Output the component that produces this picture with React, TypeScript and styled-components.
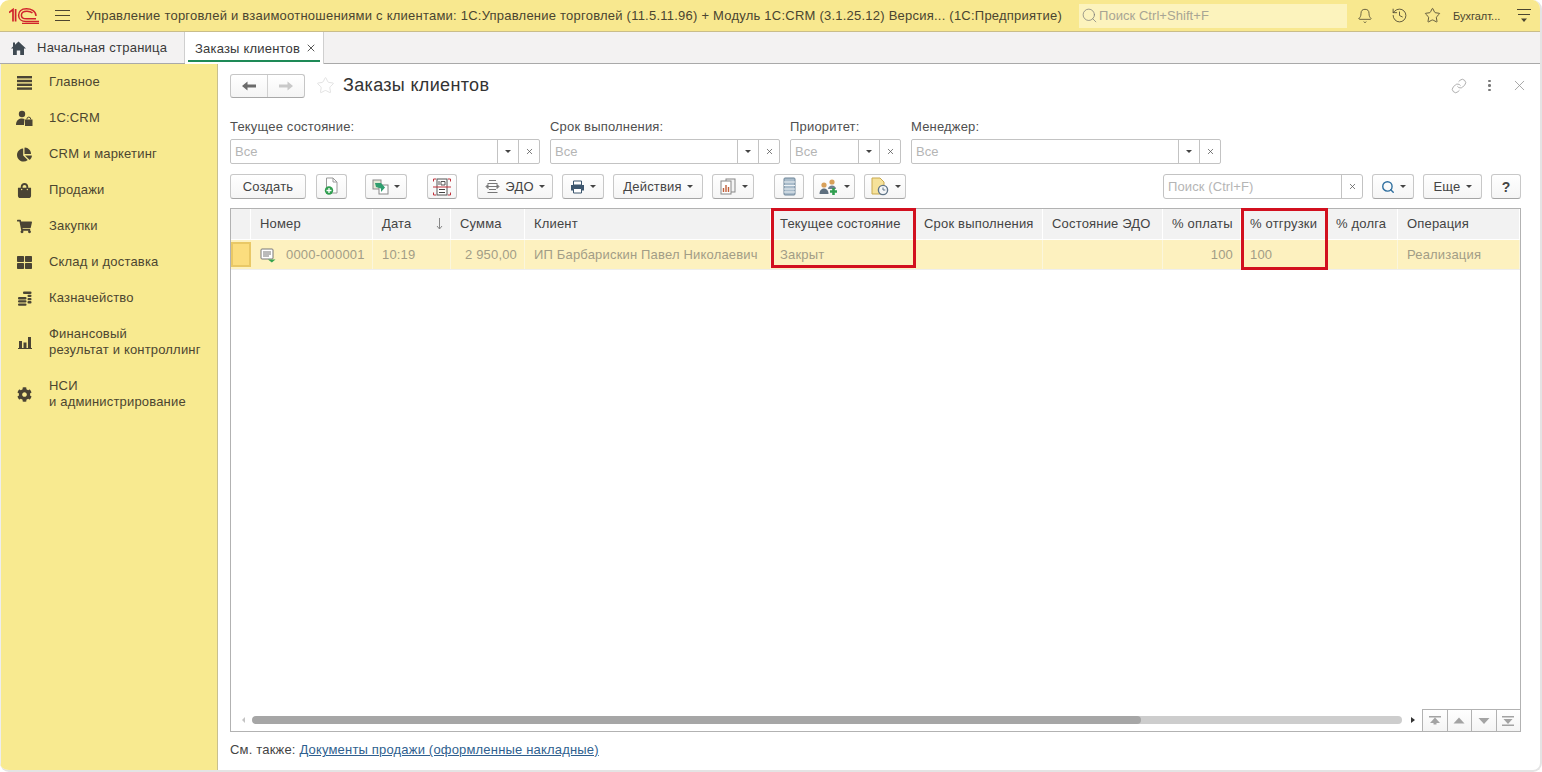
import React from 'react';
import styled, { createGlobalStyle } from 'styled-components';
import { Bell, History, Star, Link as LinkIcon, X, Search } from 'lucide-react';
import { FaChartPie, FaShoppingBag, FaShoppingCart, FaThLarge, FaCog } from 'react-icons/fa';

const GlobalStyle = createGlobalStyle`
  html, body {
    margin: 0;
    padding: 0;
    background: #fff;
  }
  * {
    box-sizing: border-box;
  }
`;

const Page = styled.div`
  width: 1542px;
  height: 772px;
  overflow: hidden;
  display: flex;
  flex-direction: column;
  font-family: 'Liberation Sans', Arial, sans-serif;
  font-size: 13px;
  letter-spacing: 0.18px;
  color: #333;
  background: #fff;
  border-radius: 9px;
  border-right: 2px solid #e4e4e4;
  border-bottom: 2px solid #e4e4e4;
`;

const TopBar = styled.header`
  height: 32px;
  flex: none;
  display: flex;
  align-items: center;
  background: #f8e88f;
  border-bottom: 1px solid #c9bd8a;
  padding-left: 9px;
`;

const MenuLines = styled.div`
  width: 15px;
  height: 11px;
  margin-left: 16px;
  border-top: 1px solid #4d4530;
  border-bottom: 1px solid #4d4530;
  position: relative;

  &::after {
    content: '';
    position: absolute;
    left: 0;
    right: 0;
    top: 4px;
    border-top: 1px solid #4d4530;
  }
`;

const AppTitle = styled.div`
  margin-left: 16px;
  width: 993px;
  white-space: nowrap;
  overflow: hidden;
  color: #4a4530;
  font-size: 13px;
  letter-spacing: 0.23px;
`;

const GlobalSearch = styled.div`
  width: 268px;
  height: 24px;
  display: flex;
  align-items: center;
  gap: 1px;
  padding-left: 2px;
  background: #fcf3bd;
  color: #a8a594;
  font-size: 13px;
  letter-spacing: 0.05px;
`;

const TopIcon = styled.div<{ $ml: number }>`
  margin-left: ${({ $ml }) => $ml}px;
  display: flex;
  align-items: center;
  color: #4a4530;
`;

const UserName = styled.div`
  margin-left: 12px;
  width: 62px;
  font-size: 11px;
  letter-spacing: 0;
  color: #4a4530;
`;

const TabBar = styled.nav`
  height: 32px;
  flex: none;
  display: flex;
  background: #f3f2f2;
  border-bottom: 1px solid #a9a9a9;
`;

const HomeTab = styled.div`
  width: 185px;
  display: flex;
  align-items: center;
  padding-left: 11px;
  gap: 11px;
  border-right: 1px solid #cfcfcf;
  color: #3a3a3a;
  letter-spacing: 0.25px;
`;

const ActiveTab = styled.div`
  width: 139px;
  height: 32px;
  padding: 0 6px 0 10px;
  display: flex;
  align-items: center;
  justify-content: space-between;
  background: #fff;
  border-right: 1px solid #cfcfcf;
  position: relative;
  color: #3a3a3a;
  letter-spacing: 0.2px;

  &::after {
    content: '';
    position: absolute;
    left: 3px;
    right: 3px;
    bottom: 2px;
    height: 2px;
    background: #1e8a57;
  }
`;

const Body = styled.div`
  flex: 1;
  min-height: 0;
  display: flex;
`;

const Sidebar = styled.aside`
  width: 218px;
  flex: none;
  background: #f8ea90;
  border-right: 1px solid #c9c08e;
  border-left: 1px solid #eee;
`;

const SideItem = styled.div<{ $tall?: boolean }>`
  height: ${({ $tall }) => ($tall ? 52 : 36)}px;
  display: flex;
  align-items: center;
  color: #4c4630;
  line-height: 16px;
`;

const SideIcon = styled.div`
  width: 48px;
  flex: none;
  display: flex;
  justify-content: center;
  padding-right: 1px;
  color: #4a4434;
`;

const Main = styled.main`
  flex: 1;
  min-width: 0;
  padding: 10px 19px 0 12px;
  display: flex;
  flex-direction: column;
`;

const TitleRow = styled.div`
  height: 23px;
  display: flex;
  align-items: center;
`;

const NavPair = styled.div`
  width: 75px;
  height: 24px;
  display: flex;
  border: 1px solid #c6c6c6;
  border-bottom-color: #a8a8a8;
  border-radius: 3px;
  background: linear-gradient(#fff, #f4f4f4);
`;

const NavHalf = styled.div<{ $divider?: boolean }>`
  flex: 1;
  display: flex;
  align-items: center;
  justify-content: center;
  border-right: ${({ $divider }) => ($divider ? '1px solid #d0d0d0' : 'none')};
`;

const FavStar = styled.div`
  margin-left: 11px;
  color: #dcdcdc;
  display: flex;
`;

const Title = styled.h1`
  margin: 0 0 0 8px;
  flex: 1;
  font-size: 18px;
  font-weight: 400;
  letter-spacing: 0.33px;
  color: #333;
`;

const WindowIcons = styled.div`
  display: flex;
  align-items: center;
  color: #929292;
  margin-right: -7px;
`;

const DotColumn = styled.div`
  margin: 0 20px 0 21px;
  width: 3px;
  display: flex;
  flex-direction: column;
  gap: 2px;
`;

const Dot = styled.span`
  width: 2.5px;
  height: 2.5px;
  background: #777;
  border-radius: 50%;
`;

const FilterRow = styled.div`
  display: flex;
  gap: 10px;
  margin-top: 22px;
`;

const Filter = styled.div<{ $w: number }>`
  width: ${({ $w }) => $w}px;
`;

const FilterLabel = styled.div`
  height: 20px;
  line-height: 15px;
  color: #4f4f4f;
`;

const FieldBox = styled.div`
  height: 25px;
  display: flex;
  border: 1px solid #c3c3c3;
  border-radius: 2px;
  background: #fff;
`;

const FieldText = styled.div`
  flex: 1;
  padding-left: 4px;
  line-height: 23px;
  color: #b5b5b5;
  font-size: 13px;
  letter-spacing: 0.1px;
`;

const FieldBtn = styled.div`
  width: 21px;
  flex: none;
  display: flex;
  align-items: center;
  justify-content: center;
  border-left: 1px solid #c3c3c3;
  color: #555;
`;

const Toolbar = styled.div`
  display: flex;
  margin-top: 10px;
  height: 25px;
`;

const ToolButton = styled.div<{ $w: number; $ml?: number }>`
  width: ${({ $w }) => $w}px;
  margin-left: ${({ $ml }) => $ml ?? 0}px;
  height: 25px;
  display: flex;
  align-items: center;
  justify-content: center;
  gap: 5px;
  border: 1px solid #c8c8c8;
  border-bottom-color: #a5a5a5;
  border-radius: 3px;
  background: linear-gradient(#fff, #f5f5f5);
  color: #444;
  flex: none;
`;

const Caret = styled.span`
  width: 0;
  height: 0;
  border-left: 3px solid transparent;
  border-right: 3px solid transparent;
  border-top: 3px solid #444;
  flex: none;
`;

const TableSearch = styled.div`
  margin-left: auto;
  width: 200px;
  height: 25px;
  display: flex;
  border: 1px solid #c3c3c3;
  border-radius: 3px;
`;

const Table = styled.section`
  position: relative;
  margin-top: 9px;
  height: 524px;
  border: 1px solid #b2b2b2;
  display: flex;
  flex-direction: column;
`;

const columns = '20px 122px 78px 74px 246px 144px 128px 120px 78px 86px 71px 1fr';

const HeadRow = styled.div`
  height: 31px;
  flex: none;
  display: grid;
  grid-template-columns: ${columns};
  background: #f2f2f2;
  border-bottom: 1px solid #fff;
`;

const HeadCell = styled.div`
  display: flex;
  align-items: center;
  justify-content: space-between;
  padding: 0 7px 1px 9px;
  border-right: 1px solid #fff;
  color: #444;
  white-space: nowrap;
`;

const DataRow = styled.div`
  height: 30px;
  flex: none;
  display: grid;
  grid-template-columns: ${columns};
  background: #fdf1bf;
  border-bottom: 1px solid #eeeeee;
`;

const DataCell = styled.div<{ $right?: boolean }>`
  display: flex;
  align-items: center;
  justify-content: ${({ $right }) => ($right ? 'flex-end' : 'flex-start')};
  padding: 0 7px 0 9px;
  border-right: 1px solid #fbf6dc;
  color: #a29d86;
  white-space: nowrap;
`;

const RowMarker = styled.div`
  margin: 2px 0;
  background: #fbdd7e;
  border: 2px solid #e9c866;
`;

const NumberCell = styled(DataCell)`
  gap: 9px;
`;

const TableGap = styled.div`
  flex: 1;
`;

const ScrollRow = styled.div`
  height: 22px;
  flex: none;
  display: flex;
  align-items: center;
`;

const ScrollTrack = styled.div`
  margin-left: 7px;
  width: 1150px;
  height: 8px;
  border-radius: 4px;
  background: #cdcdcd;
  overflow: hidden;
`;

const ScrollThumb = styled.div`
  width: 77.3%;
  height: 100%;
  border-radius: 4px;
  background: #a6a6a6;
`;

const ArrowLeft = styled.span`
  margin-left: 11px;
  border-top: 3px solid transparent;
  border-bottom: 3px solid transparent;
  border-right: 3px solid #c4c4c4;
`;

const ArrowRight = styled.span`
  margin-left: 9px;
  border-top: 3px solid transparent;
  border-bottom: 3px solid transparent;
  border-left: 4px solid #333;
`;

const PagerGroup = styled.div`
  margin-left: auto;
  display: flex;
  height: 22px;
`;

const PagerBtn = styled.div`
  width: 24.5px;
  display: flex;
  align-items: center;
  justify-content: center;
  border-left: 1px solid #b2b2b2;
  border-top: 1px solid #b2b2b2;
  background: linear-gradient(#fff, #f4f4f4);
`;

const Highlight = styled.div<{ $left: number; $w: number; $h: number }>`
  position: absolute;
  top: -1px;
  left: ${({ $left }) => $left}px;
  width: ${({ $w }) => $w}px;
  height: ${({ $h }) => $h}px;
  border: 3px solid #d2101f;
  pointer-events: none;
`;

const SeeAlso = styled.div`
  margin-top: 10px;
  line-height: 16px;
  color: #444;
`;

const DocLink = styled.span`
  color: #2f5f8f;
  text-decoration: underline;
`;

const HelpMark = styled.span`
  font-weight: 700;
  font-size: 14px;
  color: #444;
`;

const Logo1C = () => (
  <svg width="30" height="16" viewBox="0 0 30 16" fill="none" stroke="#d0242c" strokeWidth="1.5">
    <path d="M0 4.5 L4 1.5 V13.5 M6.6 1 V13.5" strokeWidth="1.7" />
    <path d="M27 8 C27 2.5 21.5 0.8 17.5 0.8 C12 0.8 9.6 4 9.6 7.2 C9.6 11 12.5 13.5 17 13.5 H30" />
    <path d="M23.5 5 C22 3.6 20 3.2 18 3.2 C14.5 3.2 12.4 5 12.4 7.2 C12.4 9.5 14.5 10.8 17.5 10.8 H27" />
    <path d="M13 15.4 H30" strokeWidth="1.2" />
  </svg>
);

const FilterMenuIcon = () => (
  <svg width="16" height="15" viewBox="0 0 16 15" fill="none" stroke="#4a4530">
    <path d="M1 1.5 H15 M2 6.5 H14" />
    <path d="M5 10.5 H11 L8 14 Z" fill="#4a4530" stroke="none" />
  </svg>
);

const HomeIcon = () => (
  <svg width="15" height="14" viewBox="0 0 15 14" fill="#3f4a52">
    <path d="M7.5 0.5 L15 7.5 H13 V14 H9.2 V9.5 H5.8 V14 H2 V7.5 H0 L2 5.6 V1.5 H4 V3.8 Z" />
  </svg>
);

const LinesIcon = () => (
  <svg width="15" height="15" viewBox="0 0 15 15" fill="currentColor">
    <rect y="1" width="15" height="2.4" />
    <rect y="4.8" width="15" height="2.4" />
    <rect y="8.6" width="15" height="2.4" />
    <rect y="12.4" width="15" height="2.4" />
  </svg>
);

const PersonBagIcon = () => (
  <svg width="17" height="17" viewBox="0 0 17 17" fill="currentColor">
    <circle cx="6" cy="4" r="3.2" />
    <path d="M0 15 C0 10 3 8.5 6 8.5 C7 8.5 8 8.7 8.5 9 L8 15 Z" />
    <path d="M9 9.5 H16.5 V16 H9 Z" />
    <path d="M10.8 9.5 a2 2.4 0 0 1 4 0" fill="none" stroke="currentColor" />
  </svg>
);

const CoinsIcon = () => (
  <svg width="14" height="15" viewBox="0 0 14 15" fill="currentColor">
    <rect x="0" y="6" width="8.5" height="2.4" rx="1" />
    <rect x="0" y="9.2" width="8.5" height="2.4" rx="1" />
    <rect x="0" y="12.4" width="8.5" height="2.4" rx="1" />
    <rect x="5" y="0.5" width="8.5" height="2.4" rx="1" />
    <rect x="9.5" y="3.7" width="4" height="2.4" rx="1" />
    <rect x="9.5" y="6.9" width="4" height="2.4" rx="1" />
    <rect x="9.5" y="10.1" width="4" height="2.4" rx="1" />
  </svg>
);

const BarsIcon = () => (
  <svg width="14" height="13" viewBox="0 0 14 13" fill="currentColor">
    <rect x="1" y="5" width="3" height="7" />
    <rect x="5.5" y="6.5" width="3" height="5.5" />
    <rect x="10" y="1" width="3" height="11" />
    <rect y="12" width="14" height="1" />
  </svg>
);

const DocAddIcon = () => (
  <svg width="15" height="19" viewBox="0 0 15 19" fill="none">
    <path d="M2.5 1 H9 L13 5 V16 H2.5 Z" fill="#fff" stroke="#9a9a9a" />
    <path d="M9 1 V5 H13" stroke="#9a9a9a" />
    <circle cx="5" cy="13.5" r="4.2" fill="#2f9e4f" />
    <path d="M5 11 V16 M2.5 13.5 H7.5" stroke="#fff" strokeWidth="1.3" />
  </svg>
);

const CopyGreenIcon = () => (
  <svg width="17" height="16" viewBox="0 0 17 16" fill="none">
    <rect x="1" y="1" width="8" height="9" fill="#e4e9d6" stroke="#8a8a8a" />
    <rect x="7" y="6" width="9" height="9" fill="#fff" stroke="#8a8a8a" />
    <path d="M3 4 L9 4 L13 8.5 L9 13 L9 9.5 L4 8 Z" fill="#2f9e6f" />
  </svg>
);

const ScanIcon = () => (
  <svg width="18" height="18" viewBox="0 0 18 18" fill="none">
    <path d="M3 1 H0.5 V3.5 M15 1 H17.5 V3.5 M3 17 H0.5 V14.5 M15 17 H17.5 V14.5" stroke="#c0303a" />
    <rect x="4" y="1" width="10" height="16" fill="#fff" stroke="#555" />
    <path d="M6 3 V7 M8 3.5 H12 V7 H8 Z" stroke="#444" strokeWidth="0.9" />
    <path d="M6 11.5 H12 M6 14.5 H12" stroke="#444" />
    <path d="M0 9 H18" stroke="#c0303a" />
  </svg>
);

const EdoIcon = () => (
  <svg width="15" height="15" viewBox="0 0 15 15" fill="none" stroke="#777">
    <path d="M4 1.5 H11 M2.5 4.5 H12.5 M2.5 7.5 H12.5 M4 10.5 H11 M2.5 13.5 H12.5" />
    <path d="M1 7.5 L3 5.5 V9.5 Z M14 7.5 L12 5.5 V9.5 Z" fill="#777" />
  </svg>
);

const PrinterIcon = () => (
  <svg width="15" height="14" viewBox="0 0 15 14" fill="none">
    <path d="M3.5 1 H11.5 V5 H3.5 Z" fill="#fff" stroke="#3c566e" />
    <path d="M1 5 H14 V10.5 H1 Z" fill="#3c566e" />
    <path d="M3.5 8.5 H11.5 V13 H3.5 Z" fill="#fff" stroke="#3c566e" />
  </svg>
);

const ReportIcon = () => (
  <svg width="18" height="17" viewBox="0 0 18 17" fill="none">
    <rect x="7" y="1" width="9" height="13" fill="#f4f4f4" stroke="#888" />
    <rect x="2" y="3" width="10" height="13" fill="#fff" stroke="#888" />
    <path d="M4.5 14 V10 M7 14 V7 M9.5 14 V9" stroke="#c0603a" strokeWidth="1.4" />
  </svg>
);

const ListIcon = () => (
  <svg width="13" height="19" viewBox="0 0 13 19" fill="none">
    <rect x="1" y="1" width="11" height="17" rx="1" fill="#a9bccb" stroke="#6f8598" />
    <path d="M1 5 H12 M1 8.5 H12 M1 12 H12 M1 15 H12" stroke="#eef2f5" />
  </svg>
);

const PeopleAddIcon = () => (
  <svg width="20" height="18" viewBox="0 0 20 18" fill="none">
    <circle cx="5" cy="7" r="2.6" fill="#d8a05a" />
    <path d="M0.5 16 C0.5 12 3 10.5 5 10.5 C7 10.5 9.5 12 9.5 16 Z" fill="#5e6f7f" />
    <circle cx="13" cy="4" r="2.6" fill="#d8a05a" />
    <path d="M9 11 C9 9 11 7.5 13 7.5 C15 7.5 17 9 17 11 Z" fill="#6e7f8f" />
    <path d="M14.5 10 V17 M11 13.5 H18" stroke="#2f9e4f" strokeWidth="2.6" />
  </svg>
);

const DocClockIcon = () => (
  <svg width="20" height="19" viewBox="0 0 20 19" fill="none">
    <path d="M2 1 H10 L14 5 V17 H2 Z" fill="#f6e29a" stroke="#c9a94f" />
    <circle cx="13" cy="13" r="4.6" fill="#f4f6f8" stroke="#5f7488" strokeWidth="1.4" />
    <path d="M13 10.5 V13 H15.3" stroke="#5f7488" />
  </svg>
);

const NavArrow = ({ color, flip }: { color: string; flip?: boolean }) => (
  <svg width="14" height="10" viewBox="0 0 14 10" fill={color}>
    <path d={flip ? 'M14 5 L8.5 0.5 V3.5 H0 V6.5 H8.5 V9.5 Z' : 'M0 5 L5.5 0.5 V3.5 H14 V6.5 H5.5 V9.5 Z'} />
  </svg>
);

const SortArrow = () => (
  <svg width="7" height="12" viewBox="0 0 7 12" fill="none" stroke="#888">
    <path d="M3.5 0 V11 M1 8 L3.5 11 L6 8" />
  </svg>
);

const PagerIcon = ({ kind }: { kind: 'first' | 'up' | 'down' | 'last' }) => {
  const fill = '#a3a3a3';
  return (
    <svg width="14" height="10" viewBox="0 0 14 10" fill={fill}>
      {kind === 'first' && <path d="M1 0 H13 V1.5 H1 Z M7 1.5 L12 7 H8.5 V8.5 H5.5 V7 H2 Z" />}
      {kind === 'up' && <path d="M7 1.5 L12.5 7.5 H1.5 Z" />}
      {kind === 'down' && <path d="M7 8 L12.5 2 H1.5 Z" />}
      {kind === 'last' && <path d="M1 0 H13 V1.5 H1 Z M2.5 3 H11.5 L7 8 Z M1 8.5 H13 V10 H1 Z" />}
    </svg>
  );
};

const RowDocIcon = () => (
  <svg width="17" height="16" viewBox="0 0 17 16" fill="none">
    <rect x="1" y="2" width="12" height="10" rx="1" fill="#fff" stroke="#777" />
    <path d="M3 5 H11 M3 7 H11 M3 9 H9" stroke="#777" />
    <path d="M8 12.5 H15.5 L11.8 15.5 Z" fill="#35a34e" />
  </svg>
);

const sideItems: { icon: React.ReactNode; text: React.ReactNode; tall?: boolean }[] = [
  { icon: <LinesIcon />, text: 'Главное' },
  { icon: <PersonBagIcon />, text: '1С:CRM' },
  { icon: <FaChartPie size={15} />, text: 'CRM и маркетинг' },
  { icon: <FaShoppingBag size={15} />, text: 'Продажи' },
  { icon: <FaShoppingCart size={15} />, text: 'Закупки' },
  { icon: <FaThLarge size={15} />, text: 'Склад и доставка' },
  { icon: <CoinsIcon />, text: 'Казначейство' },
  {
    icon: <BarsIcon />,
    text: (
      <>
        Финансовый
        <br />
        результат и контроллинг
      </>
    ),
    tall: true,
  },
  {
    icon: <FaCog size={15} />,
    text: (
      <>
        НСИ
        <br />и администрирование
      </>
    ),
    tall: true,
  },
];

const filters = [
  { label: 'Текущее состояние:', w: 310 },
  { label: 'Срок выполнения:', w: 230 },
  { label: 'Приоритет:', w: 111 },
  { label: 'Менеджер:', w: 310 },
];

const headers = [
  '',
  'Номер',
  'Дата',
  'Сумма',
  'Клиент',
  'Текущее состояние',
  'Срок выполнения',
  'Состояние ЭДО',
  '% оплаты',
  '% отгрузки',
  '% долга',
  'Операция',
];

const App: React.FC = () => {
  return (
    <Page>
      <GlobalStyle />
      <TopBar>
        <Logo1C />
        <MenuLines />
        <AppTitle>
          Управление торговлей и взаимоотношениями с клиентами: 1С:Управление торговлей (11.5.11.96) + Модуль 1С:CRM
          (3.1.25.12) Версия... (1С:Предприятие)
        </AppTitle>
        <GlobalSearch>
          <Search size={17} strokeWidth={1} color="#777" />
          Поиск Ctrl+Shift+F
        </GlobalSearch>
        <TopIcon $ml={10}>
          <Bell size={16} strokeWidth={1.2} />
        </TopIcon>
        <TopIcon $ml={18}>
          <History size={17} strokeWidth={1.2} />
        </TopIcon>
        <TopIcon $ml={16}>
          <Star size={17} strokeWidth={1.2} />
        </TopIcon>
        <UserName>Бухгалт...</UserName>
        <TopIcon $ml={1}>
          <FilterMenuIcon />
        </TopIcon>
      </TopBar>
      <TabBar>
        <HomeTab>
          <HomeIcon />
          Начальная страница
        </HomeTab>
        <ActiveTab>
          Заказы клиентов
          <X size={12} strokeWidth={1.8} color="#444" />
        </ActiveTab>
      </TabBar>
      <Body>
        <Sidebar>
          {sideItems.map((item, i) => (
            <SideItem key={i} $tall={item.tall}>
              <SideIcon>{item.icon}</SideIcon>
              <div>{item.text}</div>
            </SideItem>
          ))}
        </Sidebar>
        <Main>
          <TitleRow>
            <NavPair>
              <NavHalf $divider>
                <NavArrow color="#6b6b6b" />
              </NavHalf>
              <NavHalf>
                <NavArrow color="#c9c9c9" flip />
              </NavHalf>
            </NavPair>
            <FavStar>
              <Star size={19} strokeWidth={1} />
            </FavStar>
            <Title>Заказы клиентов</Title>
            <WindowIcons>
              <LinkIcon size={16} strokeWidth={1.1} />
              <DotColumn>
                <Dot />
                <Dot />
                <Dot />
              </DotColumn>
              <X size={17} strokeWidth={1.1} />
            </WindowIcons>
          </TitleRow>
          <FilterRow>
            {filters.map((f) => (
              <Filter key={f.label} $w={f.w}>
                <FilterLabel>{f.label}</FilterLabel>
                <FieldBox>
                  <FieldText>Все</FieldText>
                  <FieldBtn>
                    <Caret />
                  </FieldBtn>
                  <FieldBtn>
                    <X size={9} strokeWidth={2} />
                  </FieldBtn>
                </FieldBox>
              </Filter>
            ))}
          </FilterRow>
          <Toolbar>
            <ToolButton $w={76}>Создать</ToolButton>
            <ToolButton $w={31} $ml={10}>
              <DocAddIcon />
            </ToolButton>
            <ToolButton $w={42} $ml={18}>
              <CopyGreenIcon />
              <Caret />
            </ToolButton>
            <ToolButton $w={30} $ml={20}>
              <ScanIcon />
            </ToolButton>
            <ToolButton $w={76} $ml={20}>
              <EdoIcon />
              ЭДО
              <Caret />
            </ToolButton>
            <ToolButton $w={42} $ml={9}>
              <PrinterIcon />
              <Caret />
            </ToolButton>
            <ToolButton $w={90} $ml={9}>
              Действия
              <Caret />
            </ToolButton>
            <ToolButton $w={42} $ml={9}>
              <ReportIcon />
              <Caret />
            </ToolButton>
            <ToolButton $w={30} $ml={20}>
              <ListIcon />
            </ToolButton>
            <ToolButton $w={42} $ml={9}>
              <PeopleAddIcon />
              <Caret />
            </ToolButton>
            <ToolButton $w={42} $ml={9}>
              <DocClockIcon />
              <Caret />
            </ToolButton>
            <TableSearch>
              <FieldText>Поиск (Ctrl+F)</FieldText>
              <FieldBtn>
                <X size={9} strokeWidth={2} />
              </FieldBtn>
            </TableSearch>
            <ToolButton $w={42} $ml={9}>
              <Search size={14} strokeWidth={2.4} color="#2f6f9f" />
              <Caret />
            </ToolButton>
            <ToolButton $w={59} $ml={9}>
              Еще
              <Caret />
            </ToolButton>
            <ToolButton $w={30} $ml={9}>
              <HelpMark>?</HelpMark>
            </ToolButton>
          </Toolbar>
          <Table>
            <HeadRow>
              {headers.map((h, i) => (
                <HeadCell key={i}>
                  {h}
                  {h === 'Дата' && <SortArrow />}
                </HeadCell>
              ))}
            </HeadRow>
            <DataRow>
              <RowMarker />
              <NumberCell>
                <RowDocIcon />
                0000-000001
              </NumberCell>
              <DataCell>10:19</DataCell>
              <DataCell $right>2 950,00</DataCell>
              <DataCell>ИП Барбарискин Павел Николаевич</DataCell>
              <DataCell>Закрыт</DataCell>
              <DataCell />
              <DataCell />
              <DataCell $right>100</DataCell>
              <DataCell>100</DataCell>
              <DataCell />
              <DataCell>Реализация</DataCell>
            </DataRow>
            <TableGap />
            <ScrollRow>
              <ArrowLeft />
              <ScrollTrack>
                <ScrollThumb />
              </ScrollTrack>
              <ArrowRight />
              <PagerGroup>
                <PagerBtn>
                  <PagerIcon kind="first" />
                </PagerBtn>
                <PagerBtn>
                  <PagerIcon kind="up" />
                </PagerBtn>
                <PagerBtn>
                  <PagerIcon kind="down" />
                </PagerBtn>
                <PagerBtn>
                  <PagerIcon kind="last" />
                </PagerBtn>
              </PagerGroup>
            </ScrollRow>
            <Highlight $left={540} $w={145} $h={60} />
            <Highlight $left={1010} $w={87} $h={62} />
          </Table>
          <SeeAlso>
            См. также: <DocLink>Документы продажи (оформленные накладные)</DocLink>
          </SeeAlso>
        </Main>
      </Body>
    </Page>
  );
};

export default App;
